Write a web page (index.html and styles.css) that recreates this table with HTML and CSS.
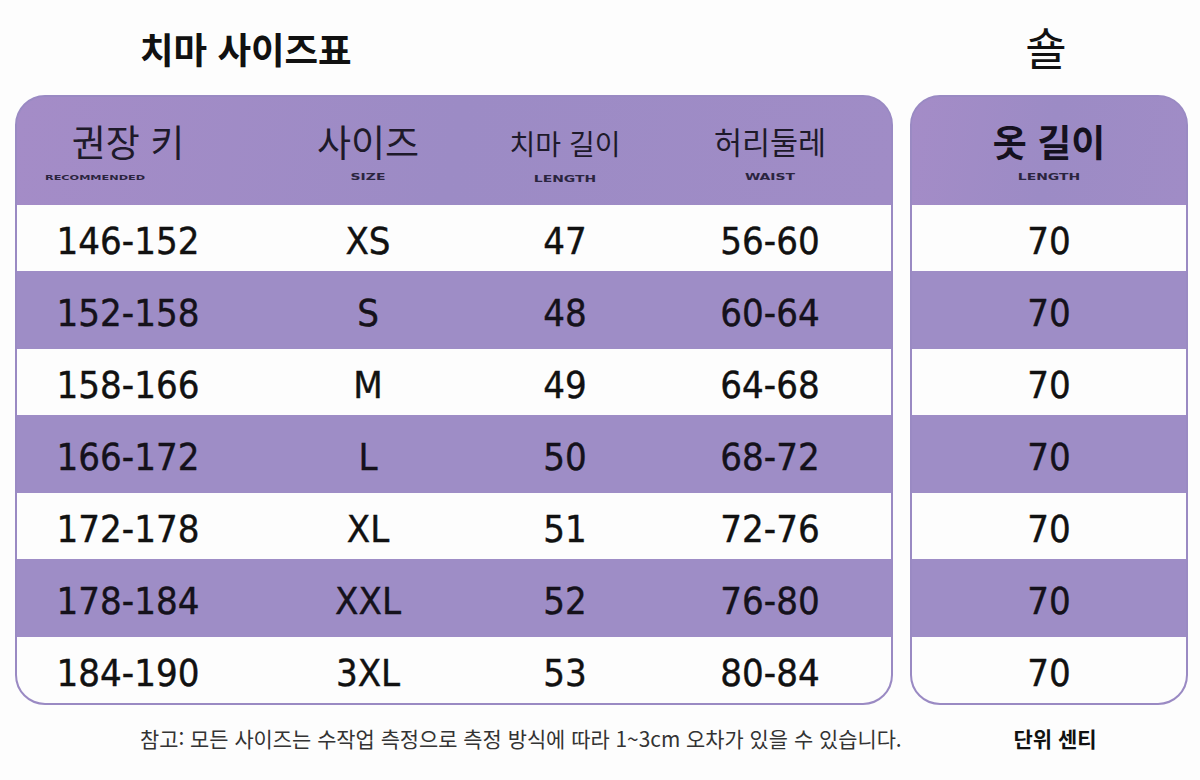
FILE: index.html
```html
<!DOCTYPE html>
<html lang="ko">
<head>
<meta charset="utf-8">
<title>치마 사이즈표</title>
<link rel="stylesheet" href="styles.css">
</head>
<body>
<div class="page">
  <div class="title-cell"><h1 class="title">치마 사이즈표</h1></div>
  <div class="shawl-cell"><span class="shawl">숄</span></div>

  <div class="table main">
    <div class="thead">
      <div class="th c1"><span class="ko big">권장 키</span><span class="sub rec">RECOMMENDED</span></div>
      <div class="th c2"><span class="ko big">사이즈</span><span class="sub">SIZE</span></div>
      <div class="th c3"><span class="ko small">치마 길이</span><span class="sub">LENGTH</span></div>
      <div class="th c4"><span class="ko mid">허리둘레</span><span class="sub">WAIST</span></div>
    </div>
    <div class="tr light"><div class="td c1">146-152</div><div class="td c2">XS</div><div class="td c3">47</div><div class="td c4">56-60</div></div>
    <div class="tr dark"><div class="td c1">152-158</div><div class="td c2">S</div><div class="td c3">48</div><div class="td c4">60-64</div></div>
    <div class="tr light"><div class="td c1">158-166</div><div class="td c2">M</div><div class="td c3">49</div><div class="td c4">64-68</div></div>
    <div class="tr dark"><div class="td c1">166-172</div><div class="td c2">L</div><div class="td c3">50</div><div class="td c4">68-72</div></div>
    <div class="tr light"><div class="td c1">172-178</div><div class="td c2">XL</div><div class="td c3">51</div><div class="td c4">72-76</div></div>
    <div class="tr dark"><div class="td c1">178-184</div><div class="td c2">XXL</div><div class="td c3">52</div><div class="td c4">76-80</div></div>
    <div class="tr light"><div class="td c1">184-190</div><div class="td c2">3XL</div><div class="td c3">53</div><div class="td c4">80-84</div></div>
  </div>

  <div class="table side">
    <div class="thead">
      <div class="th"><span class="ko bold">옷 길이</span><span class="sub">LENGTH</span></div>
    </div>
    <div class="tr light"><div class="td">70</div></div>
    <div class="tr dark"><div class="td">70</div></div>
    <div class="tr light"><div class="td">70</div></div>
    <div class="tr dark"><div class="td">70</div></div>
    <div class="tr light"><div class="td">70</div></div>
    <div class="tr dark"><div class="td">70</div></div>
    <div class="tr light"><div class="td">70</div></div>
  </div>

  <p class="note">참고: 모든 사이즈는 수작업 측정으로 측정 방식에 따라 1~3cm 오차가 있을 수 있습니다.</p>
  <p class="unit">단위 센티</p>
</div>
</body>
</html>
```
FILE: styles.css
```css
html, body {
  margin: 0;
  padding: 0;
  background: #fdfdfd;
}

body {
  font-family: "Noto Sans CJK KR", "Noto Sans", sans-serif;
  color: #111;
  width: 1200px;
  height: 780px;
  overflow: hidden;
}

.page {
  display: grid;
  grid-template-columns: 878px 278px;
  grid-template-rows: 95px 610px 65px;
  column-gap: 17px;
  padding-left: 15px;
}

.title-cell {
  display: flex;
  align-items: center;
  padding-left: 125px;
  padding-top: 4px;
}

.title {
  margin: 0;
  font-size: 36.5px;
  font-weight: 700;
  line-height: 1;
  color: #111;
}

.shawl-cell {
  display: flex;
  align-items: center;
  justify-content: center;
  padding-bottom: 2px;
  padding-right: 6px;
}

.shawl {
  font-size: 45px;
  font-weight: 400;
  line-height: 1;
  color: #111;
}

.table {
  border: 2px solid #9a8ac3;
  border-radius: 30px;
  overflow: hidden;
  background: #9e8cc6;
  display: flex;
  flex-direction: column;
}

.thead {
  height: 108px;
  display: grid;
  background: linear-gradient(100deg, #a48cc7 0%, #9c8bc5 50%, #a08cc6 100%);
}

.main .thead,
.main .tr {
  grid-template-columns: 222px 258px 136px 258px;
}

.side .thead,
.side .tr {
  grid-template-columns: 1fr;
}

.th {
  display: flex;
  flex-direction: column;
  align-items: center;
  padding-top: 21px;
}

.ko {
  height: 46px;
  display: flex;
  align-items: center;
  line-height: 1;
  color: #1e1a2a;
  white-space: nowrap;
}

.ko.big { font-size: 37px; }
.ko.small { font-size: 28px; padding-top: 2px; }
.ko.mid { font-size: 30.5px; }
.ko.bold { font-size: 37px; font-weight: 700; color: #15111f; }

.sub {
  margin-top: 4px;
  height: 13px;
  font-family: "DejaVu Sans Condensed", "DejaVu Sans", sans-serif;
  font-stretch: condensed;
  font-size: 15.5px;
  font-weight: 700;
  line-height: 13px;
  color: #2b2540;
  white-space: nowrap;
  transform: scaleY(0.58);
  transform-origin: 50% 100%;
}

.sub.rec {
  font-size: 12.5px;
  margin-right: 66px;
}

.c4 {
  padding-left: 16px;
}

.tr {
  display: grid;
}

.tr.light {
  height: 66px;
  background: #fdfdfd;
}

.tr.dark {
  height: 78px;
  background: #9e8dc6;
}

.td {
  display: flex;
  align-items: center;
  justify-content: center;
  padding-top: 5px;
  font-family: "DejaVu Sans Condensed", "DejaVu Sans", sans-serif;
  font-stretch: condensed;
  font-size: 38px;
  line-height: 1;
  color: #111;
  -webkit-text-stroke: 0.4px #111;
}

.tr.dark .td {
  color: #15111c;
}

.note {
  margin: 0;
  padding-left: 125px;
  display: flex;
  align-items: center;
  font-size: 20.9px;
  color: #333;
  white-space: nowrap;
}

.unit {
  margin: 0;
  display: flex;
  align-items: center;
  justify-content: center;
  padding-left: 12px;
  font-size: 21px;
  font-weight: 700;
  color: #111;
}
```
